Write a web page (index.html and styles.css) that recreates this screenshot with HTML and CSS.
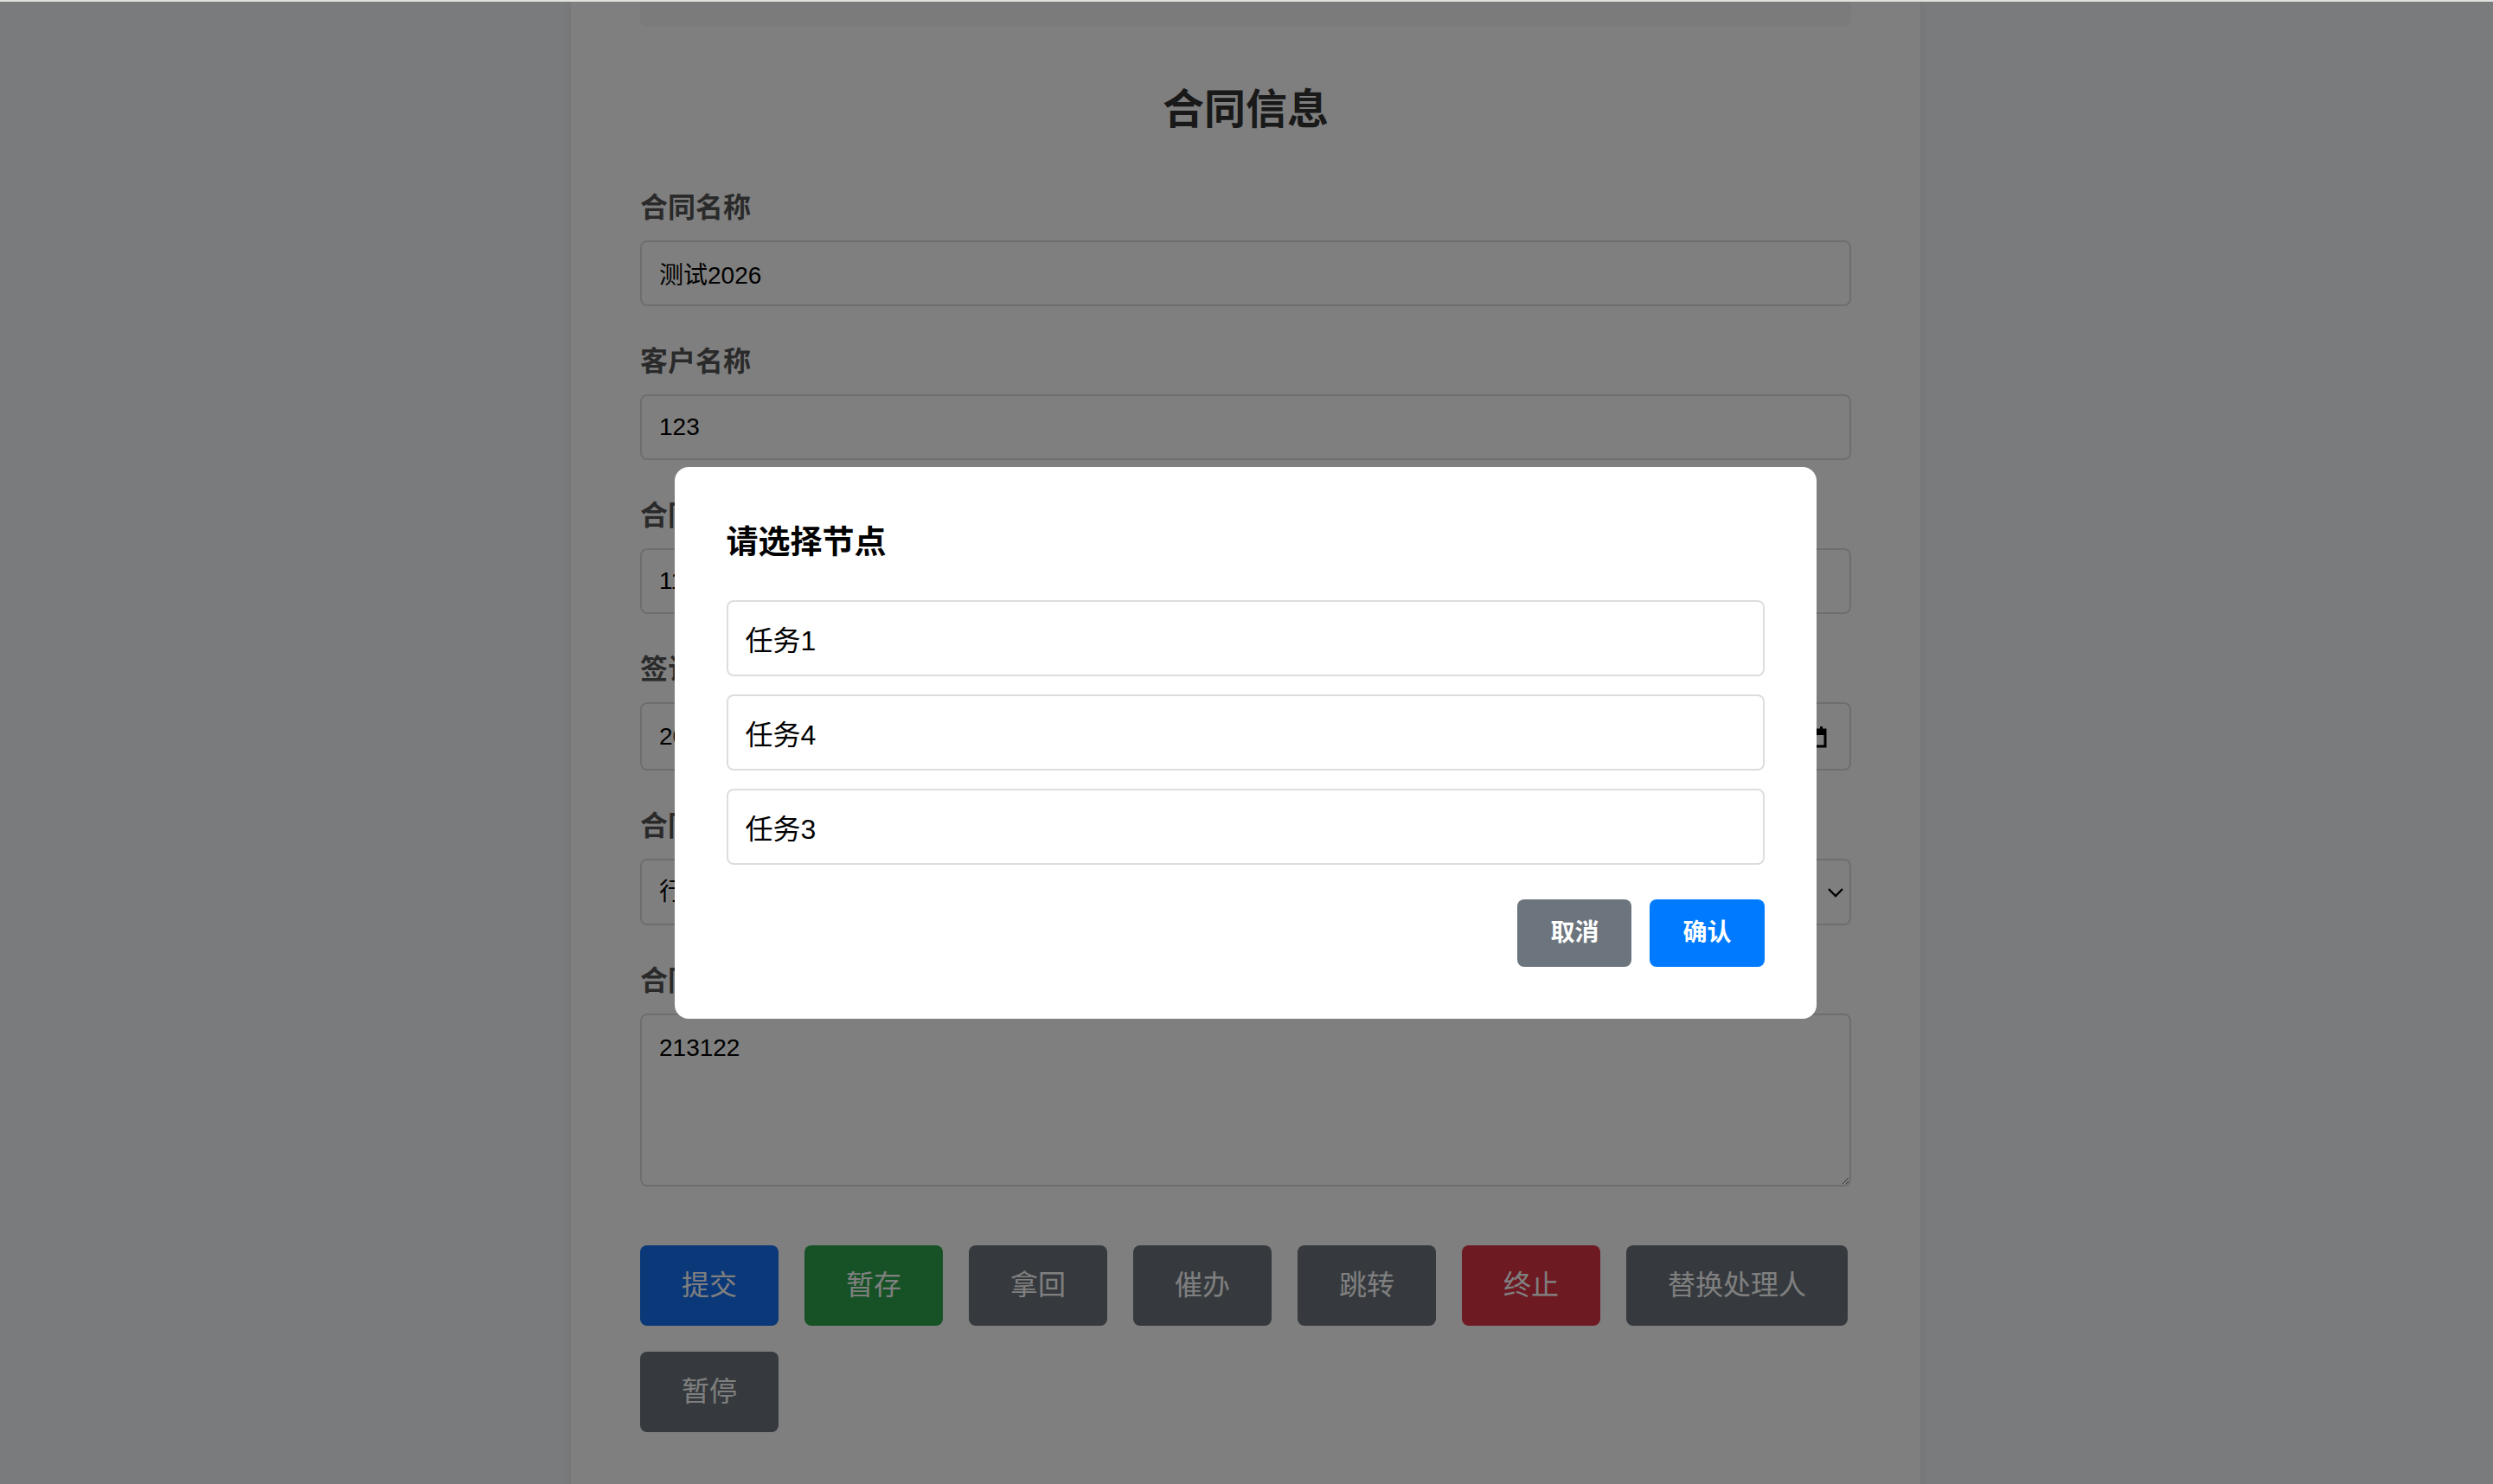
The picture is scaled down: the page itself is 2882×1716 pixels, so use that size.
FILE: index.html
```html
<!DOCTYPE html>
<html lang="zh-CN">

<head>
    <meta charset="UTF-8">
    <meta name="viewport" content="width=device-width, initial-scale=1.0">
    <title>合同信息</title>
    <link rel="stylesheet" href="styles.css">
</head>

<body>
<div class="container">
    <div class="top-bar"></div>
    <h2 class="page-title">合同信息</h2>
    <form class="form">
        <div class="form-group">
            <label class="lbl">合同名称</label>
            <input type="text" class="ipt" value="测试2026">
        </div>
        <div class="form-group">
            <label class="lbl">客户名称</label>
            <input type="text" class="ipt" value="123">
        </div>
        <div class="form-group">
            <label class="lbl">合同金额</label>
            <input type="text" class="ipt" value="11000">
        </div>
        <div class="form-group">
            <label class="lbl">签订日期</label>
            <div class="ipt-wrap">
                <input type="text" class="ipt ipt-date" value="2026/01/15">
                <svg class="ipt-icon icon-date" width="22" height="26" viewBox="0 0 22 26">
                    <rect x="2" y="5" width="18" height="19" fill="none" stroke="#000" stroke-width="3"/>
                    <rect x="2" y="5" width="18" height="6" fill="#000"/>
                    <rect x="5" y="1" width="3" height="6" fill="#000"/>
                    <rect x="14" y="1" width="3" height="6" fill="#000"/>
                </svg>
            </div>
        </div>
        <div class="form-group">
            <label class="lbl">合同类型</label>
            <div class="ipt-wrap">
                <select class="ipt ipt-select">
                    <option>行政类</option>
                    <option>采购类</option>
                </select>
                <svg class="ipt-icon icon-arrow" width="20" height="12" viewBox="0 0 20 12">
                    <path d="M2 2 L10 10 L18 2" fill="none" stroke="#000" stroke-width="2.4"/>
                </svg>
            </div>
        </div>
        <div class="form-group">
            <label class="lbl">合同内容</label>
            <textarea class="ipt ipt-area">213122</textarea>
        </div>
        <div class="btn-row">
            <button type="button" class="btn btn-blue">提交</button>
            <button type="button" class="btn btn-green">暂存</button>
            <button type="button" class="btn btn-gray">拿回</button>
            <button type="button" class="btn btn-gray">催办</button>
            <button type="button" class="btn btn-gray">跳转</button>
            <button type="button" class="btn btn-red">终止</button>
            <button type="button" class="btn btn-gray">替换处理人</button>
            <button type="button" class="btn btn-gray">暂停</button>
        </div>
    </form>
</div>

<div class="mask">
    <div class="modal">
        <h3 class="modal-title">请选择节点</h3>
        <div class="node-list">
            <div class="node-item">任务1</div>
            <div class="node-item">任务4</div>
            <div class="node-item">任务3</div>
        </div>
        <div class="modal-footer">
            <button type="button" class="mbtn mbtn-cancel">取消</button>
            <button type="button" class="mbtn mbtn-ok">确认</button>
        </div>
    </div>
</div>
</body>

</html>
```

FILE: styles.css
```css
body {
    margin: 0;
    border-top: 2px solid #e0e0dc;
    background-color: #f5f7fa;
    font-family: "Liberation Sans", "Noto Sans CJK SC", sans-serif;
}

.container {
    width: 1560px;
    margin: 0 auto;
    padding: 0 80px 80px;
    box-sizing: border-box;
    background-color: #fff;
    box-shadow: 0 0 12px rgba(0, 0, 0, 0.08);
    min-height: 1800px;
    position: relative;
    left: -1px;
}

.top-bar {
    height: 29px;
    background-color: #f6f6f6;
    border-radius: 0 0 8px 8px;
}

.page-title {
    margin: 67px 0 60px;
    font-size: 48px;
    line-height: 58px;
    text-align: center;
    color: #333;
    font-weight: bold;
}

.form-group {
    margin-bottom: 40px;
}

.lbl {
    display: block;
    margin-bottom: 14px;
    font-size: 32px;
    line-height: 48px;
    font-weight: bold;
    color: #555;
}

.ipt {
    display: block;
    width: 100%;
    height: 76px;
    padding: 0 20px;
    box-sizing: border-box;
    border: 2px solid #ddd;
    border-radius: 8px;
    background-color: #fff;
    font-family: "Liberation Sans", "Noto Sans CJK SC", sans-serif;
    font-size: 28px;
    color: #000;
}

.ipt-wrap {
    position: relative;
}

.ipt-icon {
    position: absolute;
    top: 50%;
    transform: translateY(-50%);
}

.icon-date {
    right: 28px;
}

.icon-arrow {
    right: 8px;
}

.ipt-date {
    height: 79px;
}

.ipt-select {
    height: 77px;
    appearance: none;
    -webkit-appearance: none;
}

.ipt-area {
    height: 200px;
    padding: 18px 20px;
    line-height: 1.4;
    resize: vertical;
}

.btn-row {
    display: flex;
    flex-wrap: wrap;
    gap: 30px;
    margin-top: 68px;
}

.btn {
    padding: 24px 48px;
    border: none;
    border-radius: 8px;
    font-family: "Liberation Sans", "Noto Sans CJK SC", sans-serif;
    font-size: 32px;
    line-height: 45px;
    color: #fff;
}

.btn-blue {
    background-color: #1571f0;
}

.btn-green {
    background-color: #2ca44c;
}

.btn-gray {
    background-color: #6c757d;
}

.btn-red {
    background-color: #dc3545;
}

/* 弹窗 */
.mask {
    position: fixed;
    top: 2px;
    left: 0;
    right: 0;
    bottom: 0;
    background-color: rgba(0, 0, 0, 0.5);
    display: flex;
    align-items: center;
    justify-content: center;
}

.modal {
    width: 1320px;
    padding: 60px;
    box-sizing: border-box;
    background-color: #fff;
    border-radius: 16px;
    margin-right: 3px;
}

.modal-title {
    margin: 0 0 38px;
    font-size: 37px;
    line-height: 56px;
    font-weight: bold;
    color: #000;
}

.node-list {
    display: flex;
    flex-direction: column;
    gap: 21px;
}

.node-item {
    height: 88px;
    padding: 0 20px;
    box-sizing: border-box;
    border: 2px solid #ddd;
    border-radius: 8px;
    display: flex;
    align-items: center;
    font-size: 32px;
    color: #000;
}

.modal-footer {
    display: flex;
    justify-content: flex-end;
    gap: 21px;
    margin-top: 40px;
}

.mbtn {
    padding: 18px 38px;
    border: none;
    border-radius: 8px;
    font-family: "Liberation Sans", "Noto Sans CJK SC", sans-serif;
    font-size: 28px;
    line-height: 42px;
    font-weight: bold;
    color: #fff;
}

.mbtn-cancel {
    background-color: #6c757d;
}

.mbtn-ok {
    background-color: #007bff;
}
```
